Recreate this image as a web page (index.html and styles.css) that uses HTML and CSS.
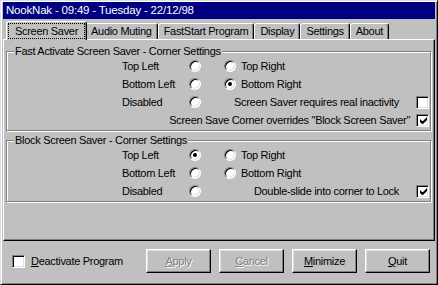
FILE: index.html
```html
<!DOCTYPE html>
<html lang="en">
<head>
    <meta charset="UTF-8">
    <meta name="viewport" content="width=device-width, initial-scale=1.0">
    <title>NookNak</title>
    <link rel="stylesheet" href="styles.css">
</head>
<body>
    <div class="window">
        <div class="titlebar">NookNak - 09:49 - Tuesday - 22/12/98</div>

        <div class="tabs">
            <div class="tab active"><span class="focus">Screen Saver</span></div>
            <div class="tab">Audio Muting</div>
            <div class="tab">FastStart Program</div>
            <div class="tab">Display</div>
            <div class="tab">Settings</div>
            <div class="tab">About</div>
        </div>

        <div class="panel">
            <fieldset class="group">
                <legend>Fast Activate Screen Saver - Corner Settings</legend>
                <div class="grid">
                    <span class="label">Top Left</span>
                    <span class="radio"></span>
                    <span class="opt"><span class="radio"></span>Top Right</span>
                    <span></span>

                    <span class="label">Bottom Left</span>
                    <span class="radio"></span>
                    <span class="opt"><span class="radio checked"></span>Bottom Right</span>
                    <span></span>

                    <span class="label">Disabled</span>
                    <span class="radio"></span>
                    <span class="right">Screen Saver requires real inactivity</span>
                    <span class="check"></span>

                    <span class="wide">Screen Save Corner overrides "Block Screen Saver"</span>
                    <span class="check">
                        <svg width="9" height="9" viewBox="0 0 9 9"><path d="M1 3v3l2 2h1l4-4V1L4 5h-1L1 3z" fill="#000"/></svg>
                    </span>
                </div>
            </fieldset>

            <fieldset class="group second">
                <legend>Block Screen Saver - Corner Settings</legend>
                <div class="grid">
                    <span class="label">Top Left</span>
                    <span class="radio checked"></span>
                    <span class="opt"><span class="radio"></span>Top Right</span>
                    <span></span>

                    <span class="label">Bottom Left</span>
                    <span class="radio"></span>
                    <span class="opt"><span class="radio"></span>Bottom Right</span>
                    <span></span>

                    <span class="label">Disabled</span>
                    <span class="radio"></span>
                    <span class="right">Double-slide into corner to Lock</span>
                    <span class="check">
                        <svg width="9" height="9" viewBox="0 0 9 9"><path d="M1 3v3l2 2h1l4-4V1L4 5h-1L1 3z" fill="#000"/></svg>
                    </span>
                </div>
            </fieldset>
        </div>

        <div class="footer">
            <span class="check"></span>
            <span class="deact"><u>D</u>eactivate Program</span>
            <div class="buttons">
                <button class="disabled"><u>A</u>pply</button>
                <button class="disabled"><u>C</u>ancel</button>
                <button><u>M</u>inimize</button>
                <button><u>Q</u>uit</button>
            </div>
        </div>
    </div>
</body>
</html>
```

FILE: styles.css
```css
* {
  margin: 0px;
  padding: 0px;
  box-sizing: border-box;
}

body {
  background-color: #c0c0c0;
  font-family: "Liberation Sans", Arial, sans-serif;
  font-size: 11px;
  letter-spacing: -0.3px;
  color: #000;
}

.window {
  width: 438px;
  height: 285px;
  padding: 1px 2px 2px 2px;
  background-color: #c0c0c0;
  border: 1px solid;
  border-color: #dfdfdf #000 #000 #dfdfdf;
  box-shadow: inset 1px 1px 0 #fff, inset -1px -1px 0 #808080;
}

.titlebar {
  height: 17px;
  line-height: 17px;
  padding-left: 3px;
  background-color: #000080;
  color: #fff;
  font-size: 11.5px;
  letter-spacing: -0.2px;
}

/* tabs */
.tabs {
  display: flex;
  align-items: flex-end;
  height: 20px;
  padding-left: 5px;
}

.tab {
  height: 16px;
  line-height: 14px;
  padding: 0 5px;
  border: 1px solid;
  border-bottom: none;
  border-color: #fff #000 transparent #fff;
  border-radius: 3px 3px 0 0;
  box-shadow: inset -1px 0 0 #808080;
  white-space: nowrap;
}

.tab.active {
  position: relative;
  z-index: 1;
  height: 19px;
  margin: 0 -2px -1px -2px;
  padding: 0 2px;
  background-color: #c0c0c0;
}

.focus {
  display: inline-block;
  margin-top: 2px;
  padding: 0 6px;
  line-height: 14px;
  outline: 1px dotted #000;
}

.panel {
  height: 202px;
  border: 1px solid;
  border-color: #fff #000 #000 #fff;
  box-shadow: inset -1px -1px 0 #808080;
  padding: 0 3px 0 2px;
}

/* group boxes */
.group {
  margin-top: 5px;
  padding: 0 1px 1px 0;
  border: 1px solid #808080;
  box-shadow: inset 1px 1px 0 #fff, 1px 1px 0 #fff;
}

.group.second {
  margin-top: 3px;
}

.group legend {
  margin-left: 7px;
  padding: 0 1px;
  line-height: 12px;
  background-color: #c0c0c0;
}

.grid {
  display: grid;
  grid-template-columns: 67px 35px minmax(0, 1fr) 13px;
  grid-auto-rows: 18px;
  align-items: center;
  padding-left: 115px;
}

.opt {
  display: flex;
  align-items: center;
  gap: 5px;
}

.right {
  justify-self: end;
  margin-right: 17px;
  white-space: nowrap;
}

.wide {
  grid-column: 1 / 4;
  justify-self: end;
  margin-right: 6px;
  white-space: nowrap;
}

/* radio buttons */
.radio {
  position: relative;
  width: 12px;
  height: 12px;
  border-radius: 50%;
  background-color: #fff;
  border: 1px solid;
  border-color: #808080 #fff #fff #808080;
  box-shadow: inset 1px 1px 0 #000, inset -1px -1px 0 #dfdfdf;
}

.radio.checked::after {
  content: "";
  position: absolute;
  left: 3px;
  top: 3px;
  width: 4px;
  height: 4px;
  border-radius: 50%;
  background-color: #000;
}

/* checkboxes */
.check {
  display: flex;
  align-items: center;
  justify-content: center;
  width: 13px;
  height: 13px;
  background-color: #fff;
  border: 1px solid;
  border-color: #808080 #fff #fff #808080;
  box-shadow: inset 1px 1px 0 #000, inset -1px -1px 0 #dfdfdf;
}

.check svg {
  display: block;
  margin: 1px 0 0 1px;
}

/* bottom bar */
.footer {
  display: flex;
  align-items: center;
  height: 40px;
  padding: 0 5px 0 9px;
}

.deact {
  margin-left: 6px;
}

.buttons {
  display: flex;
  gap: 8px;
  margin-left: auto;
}

button {
  width: 65px;
  height: 24px;
  font-family: "Liberation Sans", Arial, sans-serif;
  font-size: 11px;
  letter-spacing: -0.3px;
  color: #000;
  background-color: #c0c0c0;
  border: 1px solid;
  border-color: #fff #000 #000 #fff;
  box-shadow: inset -1px -1px 0 #808080, inset 1px 1px 0 #dfdfdf;
}

button.disabled {
  color: #808080;
  text-shadow: 1px 1px 0 #fff;
}
```
